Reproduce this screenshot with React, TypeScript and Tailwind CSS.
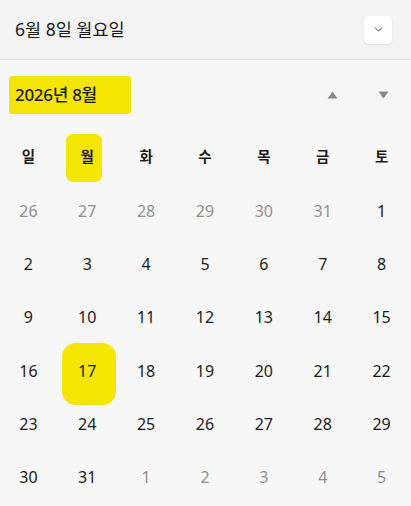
import { ChevronDown } from 'lucide-react';

const weekdays = ['일', '월', '화', '수', '목', '금', '토'];

type Day = { n: number; muted?: boolean };

// August 2026 grid, with spill-over days from July and September
const weeks: Day[][] = [
  [{ n: 26, muted: true }, { n: 27, muted: true }, { n: 28, muted: true }, { n: 29, muted: true }, { n: 30, muted: true }, { n: 31, muted: true }, { n: 1 }],
  [2, 3, 4, 5, 6, 7, 8].map((n) => ({ n })),
  [9, 10, 11, 12, 13, 14, 15].map((n) => ({ n })),
  [16, 17, 18, 19, 20, 21, 22].map((n) => ({ n })),
  [23, 24, 25, 26, 27, 28, 29].map((n) => ({ n })),
  [{ n: 30 }, { n: 31 }, { n: 1, muted: true }, { n: 2, muted: true }, { n: 3, muted: true }, { n: 4, muted: true }, { n: 5, muted: true }],
];

const font = { fontFamily: '"Noto Sans", "Noto Sans CJK KR", sans-serif' };

export default function App() {
  return (
    <div className="w-[411px] h-[506px] overflow-hidden bg-[#f7f7f7] text-[#1b1b1b]" style={font}>
      {/* Selected date bar */}
      <div className="h-[60px] flex items-center justify-between pl-[15px] pr-[19px] bg-[#f3f3f3] border-b border-[#e2e2e2]">
        <span className="text-[17.5px]">6월 8일 월요일</span>
        <button className="w-[28px] h-[28px] flex items-center justify-center rounded-[5px] bg-white shadow-[0_1px_2px_rgba(0,0,0,0.1)]">
          <ChevronDown size={13} strokeWidth={1.6} className="text-[#222]" />
        </button>
      </div>

      {/* Month header */}
      <div className="h-[70px] flex items-center justify-between pl-[9px] pr-[22px]">
        <div className="h-[38px] w-[122px] flex items-center pl-[6px] bg-[#f4e600] rounded-[3px]">
          <span className="text-[17px] font-medium tracking-[-0.3px]">2026년 8월</span>
        </div>
        <div className="flex items-center gap-[40px]">
          <svg width="11" height="8" viewBox="0 0 11 8">
            <path d="M5.5 0.5 L10.5 7.5 L0.5 7.5 Z" fill="#8a8a8a" />
          </svg>
          <svg width="11" height="8" viewBox="0 0 11 8">
            <path d="M0.5 0.5 L10.5 0.5 L5.5 7.5 Z" fill="#8a8a8a" />
          </svg>
        </div>
      </div>

      {/* Weekday header */}
      <div className="grid grid-cols-7 h-[54px] -ml-[1px]">
        {weekdays.map((w) => (
          <div key={w} className="relative flex items-center justify-center">
            {w === '월' && (
              <span className="absolute left-[8px] top-[4px] w-[36px] h-[48px] bg-[#f4e600] rounded-[7px]" />
            )}
            <span className="relative text-[14.5px] font-bold">{w}</span>
          </div>
        ))}
      </div>

      {/* Days */}
      {weeks.map((week, i) => (
        <div key={i} className="grid grid-cols-7 h-[53.3px] -ml-[1px]">
          {week.map((d, j) => (
            <div key={j} className="relative flex items-center justify-center">
              {d.n === 17 && !d.muted && (
                <span className="absolute left-[4px] top-[-1px] w-[54px] h-[62px] bg-[#f4e600] rounded-[14px]" />
              )}
              <span className={`relative text-[16px] ${d.muted ? 'text-[#8f8f8f]' : 'text-[#1b1b1b]'}`}>{d.n}</span>
            </div>
          ))}
        </div>
      ))}
    </div>
  );
}
